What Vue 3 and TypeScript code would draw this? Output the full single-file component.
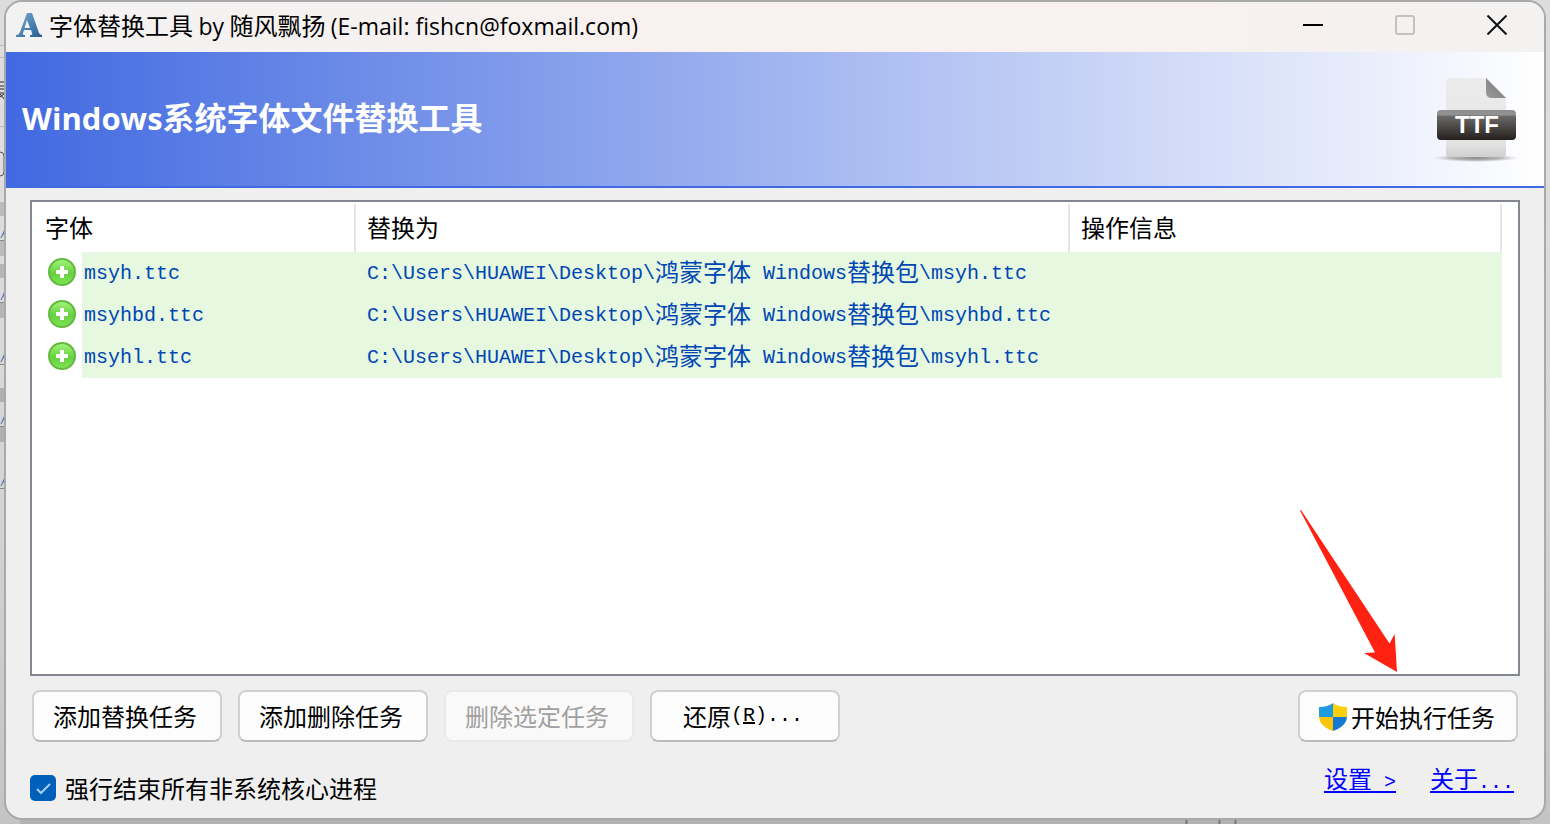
<script setup lang="ts">
interface Segment {
  text: string
  wide: boolean
}

interface FontTask {
  name: string
  target: string
}

const folder = 'C:\\Users\\HUAWEI\\Desktop\\鸿蒙字体 Windows替换包\\'
const tasks: FontTask[] = ['msyh.ttc', 'msyhbd.ttc', 'msyhl.ttc'].map((name) => ({
  name,
  target: folder + name,
}))

const segments = (value: string): Segment[] =>
  (value.match(/[\u4e00-\u9fff]+|[^\u4e00-\u9fff]+/g) ?? []).map((text) => ({
    text,
    wide: /[\u4e00-\u9fff]/.test(text),
  }))

const leftIcons = [231, 293, 355, 417, 479]
</script>

<template>
  <div class="desktop">
    <svg class="behind" aria-hidden="true">
      <rect x="20" y="0" width="1500" height="3" fill="#b4b4b4" />
      <rect x="20" y="818" width="1500" height="6" fill="#b2b2b2" />
      <path d="M1186.500 818v6M1219.500 818v6M1235.500 818v6" stroke="#777" stroke-width="2" />
      <rect x="0" y="202" width="6" height="14" fill="#bbb" />
      <rect x="0" y="241" width="6" height="15" fill="#bbb" />
      <rect x="0" y="264" width="6" height="14" fill="#b6b6b6" />
      <rect x="0" y="303" width="6" height="15" fill="#b6b6b6" />
      <rect x="0" y="388" width="6" height="14" fill="#b0b0b0" />
      <rect x="0" y="427" width="6" height="15" fill="#b0b0b0" />
      <path d="M0 45.500H6M0 57.500H6M0 126.500H6" stroke="#bbb" />
      <path d="M0 82h6M0 86h6M5 86v3M0 89h4M0 93h5M0 97l4-3M0 94l5 6" fill="none" stroke="#222" stroke-width="1" />
      <path d="M0 152q4 0 4 4v16q0 4-4 4" fill="none" stroke="#555" stroke-width="1" />
      <g v-for="y in leftIcons" :key="y">
        <path :d="`M1 ${y + 7}L6 ${y - 4}M3 ${y + 3}H6`" stroke="#4a68a8" stroke-width="1" />
        <path :d="`M0 ${y + 9.5}H6`" stroke="#888" />
      </g>
      <path d="M134 1h10M156 1h8M232 0v2M255 0v2M332 0v2M350 0v2M436 0v2M476 1h12M497 1h16M606 1h30M654 1h20M684 1h14" stroke="#555" stroke-width="2" />
      <path d="M154 0v2M446 1h7" stroke="#2a75b5" stroke-width="2" />
    </svg>

    <main class="window">
      <header class="titlebar">
        <svg class="app-icon" viewBox="0 0 26 26" aria-hidden="true">
          <defs>
            <linearGradient id="letter" x1="0" y1="0" x2="1" y2="1">
              <stop offset="0" stop-color="#79acd3" />
              <stop offset="1" stop-color="#245d91" />
            </linearGradient>
          </defs>
          <path fill="url(#letter)" fill-rule="evenodd" d="M11 1h5l7 20q1 2 3 2v2H14v-2q3 0 2-2l-1-3H8l-1 3q-1 2 2 2v2H0v-2q3 0 4-3zM11 8L8.500 16H14z" />
        </svg>
        <h1 class="title">字体替换工具 <span>by</span> 随风飘扬 <span>(E-mail: fishcn@foxmail.com)</span></h1>
        <div class="controls">
          <button type="button" aria-label="最小化">
            <svg viewBox="0 0 20 20"><path d="M0 10H20" stroke="#000" stroke-width="2" /></svg>
          </button>
          <button type="button" aria-label="最大化" disabled>
            <svg viewBox="0 0 20 20"><rect x="1" y="1" width="18" height="18" rx="2" fill="none" stroke="#c4c1c1" stroke-width="2" /></svg>
          </button>
          <button type="button" aria-label="关闭">
            <svg viewBox="0 0 20 20"><path d="M0.500 0.500L19.500 19.500M19.500 0.500L0.500 19.500" stroke="#111" stroke-width="2" /></svg>
          </button>
        </div>
      </header>

      <section class="banner">
        <h2><span>Windows</span>系统字体文件替换工具</h2>
        <svg class="ttf" viewBox="0 0 88 88" role="img" aria-label="TTF">
          <defs>
            <linearGradient id="paper" x1="0" y1="0" x2="0" y2="1">
              <stop offset="0" stop-color="#ececec" />
              <stop offset="0.700" stop-color="#e6e6e6" />
              <stop offset="0.850" stop-color="#e2e2e2" />
              <stop offset="1" stop-color="#cfcfcf" />
            </linearGradient>
            <linearGradient id="band" x1="0" y1="0" x2="0" y2="1">
              <stop offset="0" stop-color="#8e8e8e" />
              <stop offset="0.150" stop-color="#929292" />
              <stop offset="0.220" stop-color="#696867" />
              <stop offset="1" stop-color="#241f1d" />
            </linearGradient>
            <linearGradient id="fold" x1="0" y1="1" x2="1" y2="0">
              <stop offset="0" stop-color="#999" />
              <stop offset="1" stop-color="#777" />
            </linearGradient>
            <radialGradient id="ground">
              <stop offset="0" stop-color="#888" />
              <stop offset="0.600" stop-color="#aaa" stop-opacity="0.800" />
              <stop offset="1" stop-color="#ccc" stop-opacity="0" />
            </radialGradient>
          </defs>
          <ellipse cx="44" cy="83" rx="43" ry="4" fill="url(#ground)" />
          <path d="M18 3H54L74 23V78q0 4-4 4H18q-4 0-4-4V7q0-4 4-4z" fill="url(#paper)" />
          <path d="M54 3L74 23H60q-6 0-6-6z" fill="url(#fold)" />
          <rect x="5" y="35" width="79" height="30" rx="4" fill="url(#band)" />
          <text x="45" y="58" text-anchor="middle">TTF</text>
        </svg>
      </section>

      <div class="content">
        <div class="list">
          <table>
            <colgroup>
              <col class="col-font" />
              <col class="col-target" />
              <col />
            </colgroup>
            <thead>
              <tr>
                <th scope="col">字体</th>
                <th scope="col">替换为</th>
                <th scope="col">操作信息</th>
              </tr>
            </thead>
            <tbody>
              <tr v-for="task in tasks" :key="task.name">
                <td class="font-cell">
                  <div>
                    <svg class="plus" viewBox="0 0 28 28" aria-hidden="true">
                      <defs>
                        <linearGradient id="green" x1="0" y1="0" x2="0" y2="1">
                          <stop offset="0" stop-color="#a4f77c" />
                          <stop offset="0.550" stop-color="#66d040" />
                          <stop offset="1" stop-color="#7fe456" />
                        </linearGradient>
                      </defs>
                      <circle cx="14" cy="14" r="13" fill="url(#green)" stroke="#62ba40" stroke-width="2" />
                      <path d="M12 8h4v4h4v4h-4v4h-4v-4H8v-4h4z" fill="#fff" />
                    </svg>
                    <span class="mono">{{ task.name }}</span>
                  </div>
                </td>
                <td class="path">
                  <span v-for="(part, i) in segments(task.target)" :key="i" :class="{ mono: !part.wide }">{{ part.text }}</span>
                </td>
                <td></td>
              </tr>
            </tbody>
          </table>
        </div>

        <div class="actions">
          <button type="button" class="btn">添加替换任务</button>
          <button type="button" class="btn">添加删除任务</button>
          <button type="button" class="btn" disabled>删除选定任务</button>
          <button type="button" class="btn">还原<span class="mono">(<u>R</u>)...</span></button>
          <button type="button" class="btn run">
            <svg class="shield" viewBox="0 0 28 28" aria-hidden="true">
              <defs>
                <clipPath id="shield-shape">
                  <path d="M14 0q5 4 14 4v9q0 10-14 15Q0 23 0 13V4q9 0 14-4z" />
                </clipPath>
              </defs>
              <g clip-path="url(#shield-shape)">
                <rect width="14" height="14" fill="#1f9ce0" />
                <rect x="14" width="14" height="14" fill="#fccf08" />
                <rect y="14" width="14" height="14" fill="#fbc30b" />
                <rect x="14" y="14" width="14" height="14" fill="#1579d0" />
              </g>
            </svg>
            开始执行任务
          </button>
          <svg class="arrow" viewBox="0 0 98 162" aria-hidden="true">
            <path d="M0 0.500L1 0L89.500 133.500L94.700 124L97 162L64 143L75 142.500z" fill="#ff2213" />
          </svg>
        </div>

        <footer>
          <label>
            <input type="checkbox" checked />
            <span>强行结束所有非系统核心进程</span>
          </label>
          <nav>
            <a href="#settings">设置<span class="mono"> &gt;</span></a>
            <a href="#about">关于<span class="mono">...</span></a>
          </nav>
        </footer>
      </div>
    </main>
  </div>
</template>

<style>
body {
  margin: 0;
}
</style>

<style scoped>
* {
  box-sizing: border-box;
}

.desktop {
  position: relative;
  display: flex;
  min-height: 100vh;
  padding: 0 4px 4px;
  background: linear-gradient(180deg, #dcdcdc, #dedede 20%, #d4d4d4 60%, #c4c4c4);
  color: #000;
  font-family: "Noto Sans CJK SC", sans-serif;
  font-size: 24px;
  line-height: 32px;
}

.behind {
  position: absolute;
  inset: 0;
  width: 100%;
  height: 100%;
}

.window {
  position: relative;
  display: flex;
  flex: 1;
  flex-direction: column;
  overflow: hidden;
  border: 2px solid #a9a9a9;
  border-radius: 18px;
  background: #efefef;
}

.titlebar {
  display: flex;
  align-items: center;
  height: 50px;
  padding: 0 1px 4px 10px;
  background: linear-gradient(90deg, #f3f2f2, #f8f1f0 40%, #f8f1ef 75%, #f3f2f1);
}

.app-icon {
  width: 26px;
  height: 26px;
}

.title {
  flex: 1;
  margin: 0 0 0 7px;
  font-size: 24px;
  font-weight: 400;
  white-space: nowrap;
}

.title span {
  font-family: "Open Sans", sans-serif;
  font-size: 23px;
}

.controls {
  display: flex;
}

.controls button {
  display: grid;
  width: 92px;
  height: 46px;
  padding: 0;
  place-items: center;
  border: 0;
  background: none;
}

.controls svg {
  width: 20px;
  height: 20px;
}

.banner {
  display: flex;
  align-items: center;
  justify-content: space-between;
  height: 136px;
  padding: 0 24px 0 16px;
  border-bottom: 2px solid #4169e1;
  background: linear-gradient(90deg, #4169e1, #fff);
}

.banner h2 {
  margin: 0;
  padding-bottom: 4px;
  color: #fff;
  font-size: 32px;
  font-weight: 700;
  line-height: 40px;
}

.banner h2 span {
  font-family: "Open Sans", sans-serif;
  font-size: 31px;
}

.ttf {
  width: 88px;
  height: 88px;
}

.ttf text {
  fill: #fff;
  font-family: "Liberation Sans", sans-serif;
  font-size: 24px;
  font-weight: 700;
}

.content {
  display: flex;
  flex: 1;
  flex-direction: column;
  padding: 12px 24px 14px;
}

.list {
  flex: 1;
  padding-right: 16px;
  border: 2px solid #828790;
  background: #fff;
}

table {
  width: 100%;
  border-collapse: collapse;
  table-layout: fixed;
}

.col-font {
  width: 324px;
}

.col-target {
  width: 714px;
}

th {
  height: 50px;
  padding: 0 0 0 13px;
  background: linear-gradient(#e5e5e5, #e5e5e5) right bottom / 2px 48px no-repeat;
  font-weight: 400;
  text-align: left;
}

th + th {
  padding-left: 11px;
}

td {
  height: 42px;
  padding: 0;
  background: #e6f8df;
  color: #0046b4;
  white-space: nowrap;
}

.path {
  padding: 0 0 4px 11px;
}

.font-cell {
  background: linear-gradient(90deg, #fff 50px, #e6f8df 50px);
}

.font-cell div {
  display: flex;
  align-items: center;
  gap: 8px;
  padding: 0 0 2px 16px;
}

.mono {
  font-family: "Liberation Mono", monospace;
  font-size: 20px;
  white-space: pre;
}

.font-cell .mono {
  padding-top: 4px;
}

.path .mono {
  vertical-align: 2px;
  line-height: 24px;
}

.plus {
  width: 28px;
  height: 28px;
}

.actions {
  position: relative;
  display: flex;
  gap: 16px;
  padding: 14px 2px 0;
}

.btn {
  display: flex;
  align-items: center;
  justify-content: center;
  width: 190px;
  height: 52px;
  padding: 0 4px 0 0;
  border: 2px solid #d0d0d0;
  border-bottom-color: #bbb;
  border-radius: 8px;
  background: #fdfdfd;
  color: #000;
  font: inherit;
  white-space: nowrap;
}

.btn:disabled {
  border-color: #e9e9e9;
  background: #f9f9f9;
  color: #a0a0a0;
}

.run {
  gap: 4px;
  width: 220px;
  margin-left: auto;
  padding: 2px 2px 0 0;
}

.shield {
  width: 28px;
  height: 28px;
}

.arrow {
  position: absolute;
  right: 122px;
  bottom: 70px;
  width: 98px;
  height: 162px;
  pointer-events: none;
}

footer {
  display: flex;
  align-items: flex-start;
  justify-content: space-between;
  margin-top: 20px;
}

label {
  display: flex;
  align-items: center;
  gap: 9px;
  margin-top: 10px;
}

input {
  width: 26px;
  height: 26px;
  margin: 0;
  appearance: none;
  border-radius: 5px;
  background: #005fb8 url("data:image/svg+xml,%3Csvg xmlns='http://www.w3.org/2000/svg' viewBox='0 0 26 26'%3E%3Cpath d='M7 14l4 4L20 9' fill='none' stroke='%23a9cdec' stroke-width='2'/%3E%3C/svg%3E");
}

nav {
  display: flex;
  gap: 34px;
  padding-right: 6px;
}

a {
  color: #00f;
  text-decoration-thickness: 2px;
  text-underline-offset: 3px;
}
</style>
